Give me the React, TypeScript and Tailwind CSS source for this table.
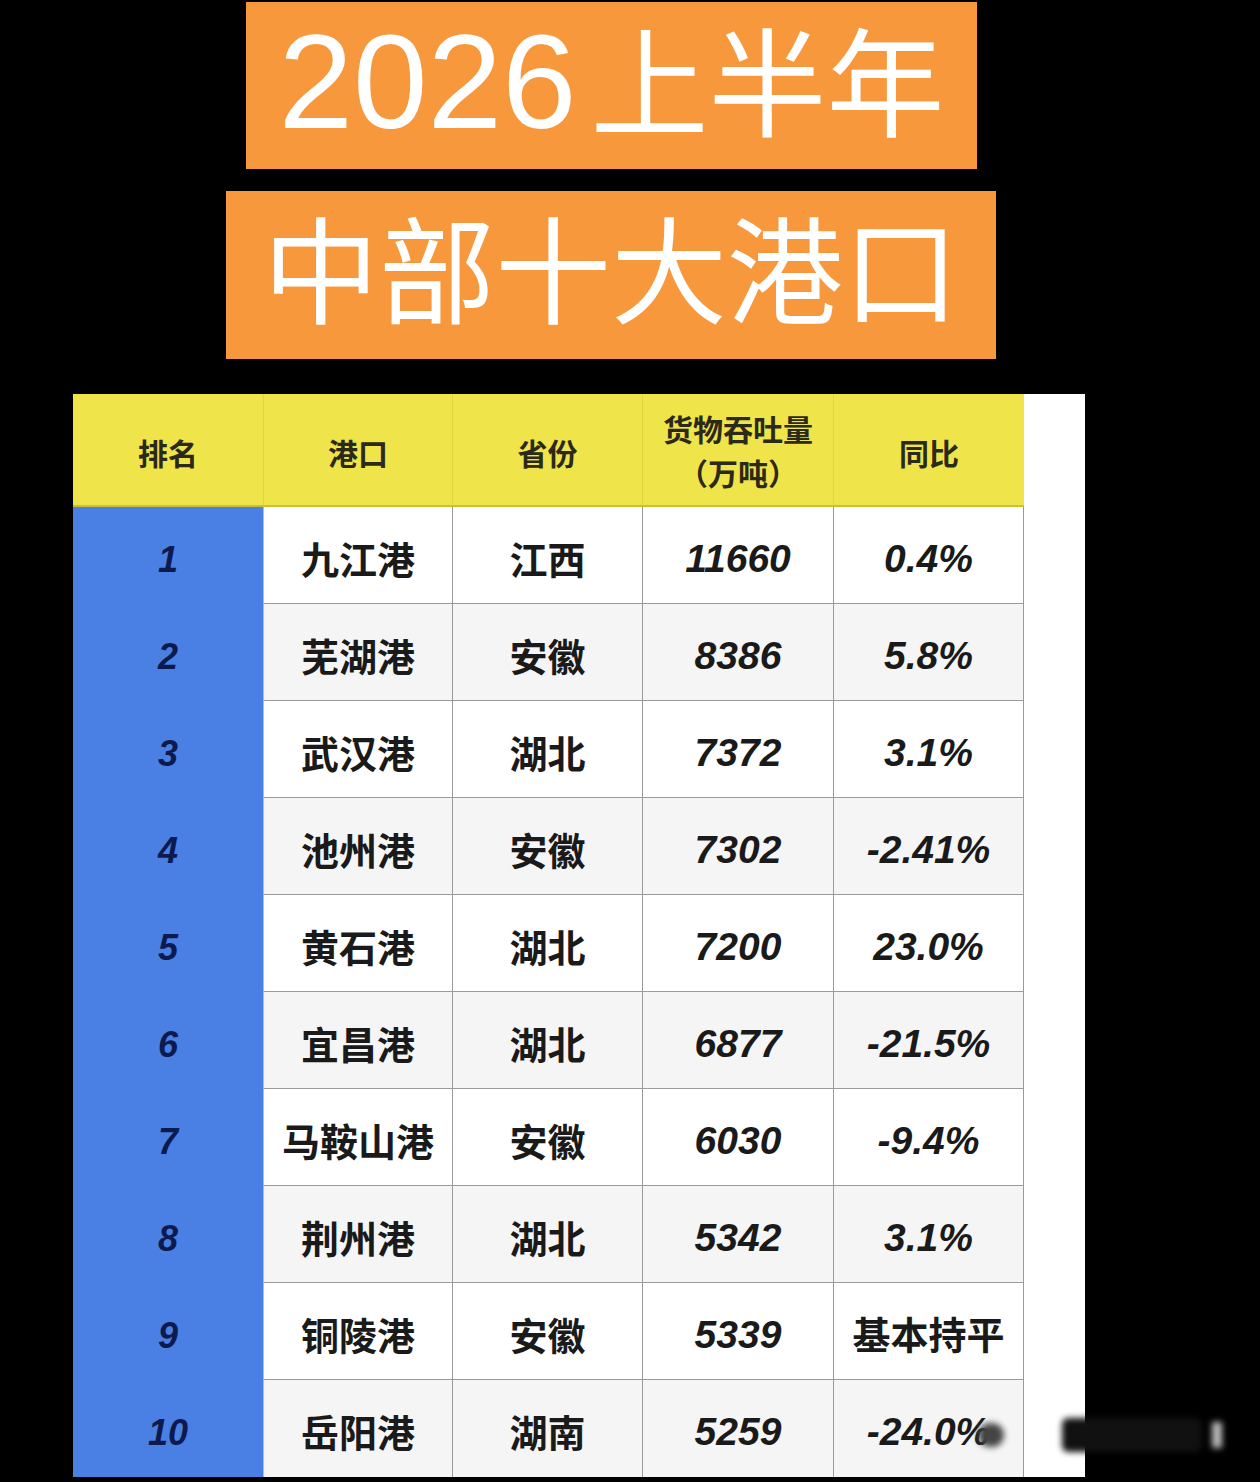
import React from "react";

const rows = [
  ["1", "九江港", "江西", "11660", "0.4%"],
  ["2", "芜湖港", "安徽", "8386", "5.8%"],
  ["3", "武汉港", "湖北", "7372", "3.1%"],
  ["4", "池州港", "安徽", "7302", "-2.41%"],
  ["5", "黄石港", "湖北", "7200", "23.0%"],
  ["6", "宜昌港", "湖北", "6877", "-21.5%"],
  ["7", "马鞍山港", "安徽", "6030", "-9.4%"],
  ["8", "荆州港", "湖北", "5342", "3.1%"],
  ["9", "铜陵港", "安徽", "5339", "基本持平"],
  ["10", "岳阳港", "湖南", "5259", "-24.0%"],
];

const cjk = { fontFamily: '"Noto Sans CJK SC", "Noto Sans", sans-serif' };
const num = { fontFamily: '"Liberation Sans", Arial, "Noto Sans CJK SC", sans-serif' };

export default function App() {
  return (
    <div className="relative h-[1482px] w-[1260px] overflow-hidden bg-black" style={cjk}>
      <div className="ml-[246px] mt-[2px] flex h-[167px] w-[731px] items-start justify-center bg-[#f7983c]">
        <div className="flex items-baseline text-white">
          <span className="text-[134px] leading-[150px]" style={num}>2026</span>
          <span className="ml-[14px] text-[118px] leading-[150px]" style={cjk}>上半年</span>
        </div>
      </div>
      <div className="ml-[226px] mt-[22px] flex h-[168px] w-[770px] items-start justify-center bg-[#f7983c]">
        <span className="text-[116px] leading-[146px] text-white" style={cjk}>
          中部十大港口
        </span>
      </div>

      <div className="ml-[73px] mt-[35px] flex w-[1012px] bg-white">
        <div className="w-[951px]">
          <div className="grid h-[113px] grid-cols-[190px_189px_190px_191px_191px] border-b-2 border-[#c8c03a] bg-[#efe44a] text-[30px] font-bold leading-[44px] text-[#2b2a18]">
            <div className="flex items-center justify-center pt-[4px]">排名</div>
            <div className="flex items-center justify-center border-l border-[#e2d640] pt-[4px]">港口</div>
            <div className="flex items-center justify-center border-l border-[#e2d640] pt-[4px]">省份</div>
            <div className="flex flex-col items-center justify-center border-l border-[#e2d640] text-center">
              <span>货物吞吐量</span>
              <span>（万吨）</span>
            </div>
            <div className="flex items-center justify-center border-l border-[#e2d640] pt-[4px]">同比</div>
          </div>
          {rows.map((r, i) => (
            <div
              key={r[0]}
              className={
                "grid h-[97px] grid-cols-[190px_189px_190px_191px_191px] " +
                (i % 2 === 1 ? "bg-[#f5f5f5]" : "bg-white")
              }
            >
              <div className="flex items-center justify-center bg-[#4a80e3] pt-[8px] text-[36px] font-bold italic text-[#0c1a4d]" style={num}>
                {r[0]}
              </div>
              <div className={"flex items-center justify-center border-l border-[#bbbbbb] pt-[4px] text-[38px] font-bold text-[#1a1a1a] " + (i < 9 ? "border-b border-b-[#9a9a9a]" : "")}>
                {r[1]}
              </div>
              <div className={"flex items-center justify-center border-l border-[#9a9a9a] pt-[4px] text-[38px] font-bold text-[#1a1a1a] " + (i < 9 ? "border-b border-b-[#9a9a9a]" : "")}>
                {r[2]}
              </div>
              <div className={"flex items-center justify-center border-l border-[#9a9a9a] pt-[8px] text-[39px] font-bold italic text-[#1a1a1a] " + (i < 9 ? "border-b border-b-[#9a9a9a]" : "")} style={num}>
                {r[3]}
              </div>
              <div className={"flex items-center justify-center border-x border-[#9a9a9a] font-bold text-[#1a1a1a] " + (r[4] === "基本持平" ? "pt-[2px] text-[38px] " : "pt-[8px] text-[39px] italic ") + (i < 9 ? "border-b border-b-[#9a9a9a]" : "")} style={r[4] === "基本持平" ? cjk : num}>
                {r[4]}
              </div>
            </div>
          ))}
        </div>
        <div className="flex-1 bg-white" />
      </div>

      <div className="pointer-events-none absolute left-[978px] top-[1418px] flex items-center blur-[3px]">
        <div className="h-[24px] w-[26px] rounded-full bg-[#444]" />
        <div className="w-[58px]" />
        <div className="h-[34px] w-[140px] rounded-[6px] bg-[#111]" />
        <div className="ml-[10px] h-[26px] w-[10px] bg-[#bbb]" />
      </div>
    </div>
  );
}
